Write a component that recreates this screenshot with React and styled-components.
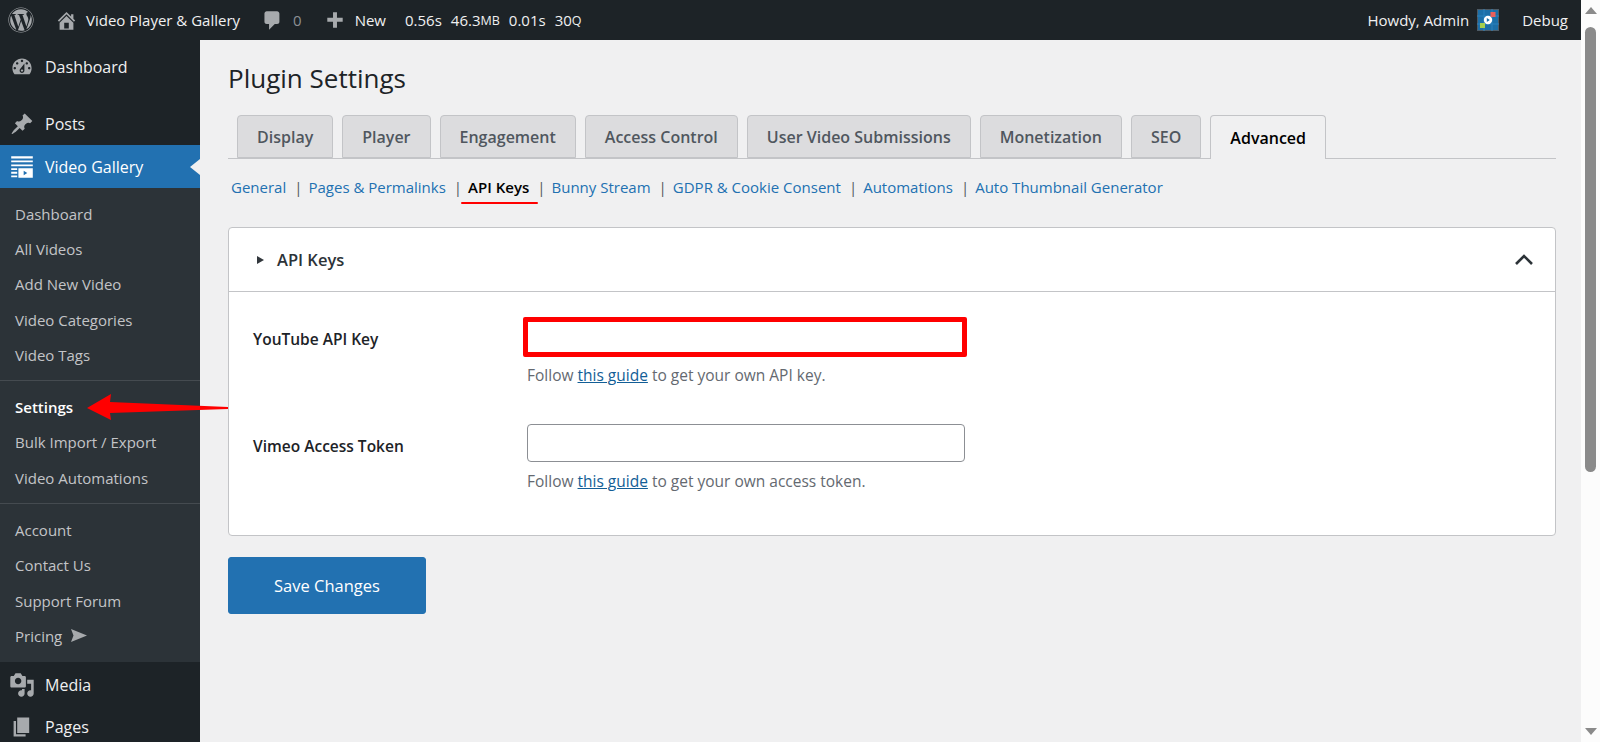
import React from "react";
import styled, { createGlobalStyle } from "styled-components";
import { FaWordpress } from "react-icons/fa";

const Global = createGlobalStyle`
  html, body { margin: 0; padding: 0; height: 100%; overflow: hidden; }
  body { font-family: "Open Sans", "Noto Sans", "Liberation Sans", sans-serif; background: #f0f0f1; }
  * { box-sizing: border-box; }
`;

const Shell = styled.div`
  position: relative;
  display: flex;
  width: 1600px;
  height: 742px;
  overflow: hidden;
`;
const Page = styled.div`
  flex: 1;
  min-width: 0;
  display: flex;
  flex-direction: column;
`;
const TopBar = styled.header`
  height: 40px;
  flex: none;
  display: flex;
  align-items: center;
  background: #1d2327;
  color: #f0f0f1;
  font-size: 15px;
  padding: 0 13px 0 8px;
  white-space: nowrap;
`;
const BarItem = styled.span`
  display: inline-flex;
  align-items: center;
  gap: ${(p) => p.$gap || 0}px;
  margin-left: ${(p) => p.$ml || 0}px;
  color: ${(p) => p.$muted ? "#8c8f94" : "#f0f0f1"};
`;
const BarIcon = styled.svg`
  width: ${(p) => p.$size || 20}px;
  height: ${(p) => p.$size || 20}px;
  fill: #a7aaad;
  flex: none;
`;
const Small = styled.span`
  font-size: 12.5px;
`;
const BarSpacer = styled.div`
  flex: 1;
`;
const Body = styled.div`
  flex: 1;
  min-height: 0;
  display: flex;
`;
const Sidebar = styled.nav`
  width: 200px;
  flex: none;
  background: #1d2327;
  padding-top: 6px;
`;
const MenuRow = styled.div`
  position: relative;
  height: ${(p) => p.$h || 42}px;
  display: flex;
  align-items: center;
  gap: 0;
  color: ${(p) => p.$active ? "#fff" : "#f0f0f1"};
  background: ${(p) => p.$active ? "#2271b1" : "transparent"};
  font-size: 16px;
  margin-top: ${(p) => p.$mt || 0}px;
  ${(p) => p.$active && `
    &::after {
      content: "";
      position: absolute;
      right: 0;
      top: 50%;
      margin-top: -8px;
      border: 8px solid transparent;
      border-left: 0;
      border-right: 10px solid #f0f0f1;
    }
  `}
`;
const MenuIconSlot = styled.span`
  width: 45px;
  flex: none;
  display: flex;
  justify-content: center;
  padding-right: 1px;
`;
const MenuIcon = styled.svg`
  width: ${(p) => p.$size || 24}px;
  height: ${(p) => p.$size || 24}px;
  fill: ${(p) => p.$active ? "#fff" : "#a7aaad"};
`;
const SubMenu = styled.div`
  background: #2c3338;
`;
const SubGroup = styled.div`
  padding: 8px 0;
  border-bottom: ${(p) => p.$last ? "none" : "1px solid #454b50"};
`;
const SubItem = styled.div`
  height: 35.3px;
  display: flex;
  align-items: center;
  gap: 9px;
  padding-left: 15px;
  font-size: 15px;
  color: ${(p) => p.$current ? "#fff" : "#c3c4c7"};
  font-weight: ${(p) => p.$current ? 600 : 400};
`;
const PricingGlyph = styled.svg`
  width: 16px;
  height: 13px;
  fill: #a7aaad;
`;
const Main = styled.main`
  flex: 1;
  min-width: 0;
  padding: 0 25px 0 28px;
`;
const Title = styled.h1`
  margin: 0;
  height: 75px;
  display: flex;
  align-items: center;
  font-size: 26px;
  font-weight: 400;
  color: #1d2327;
`;
const Tabs = styled.div`
  display: flex;
  gap: 9px;
  padding-left: 9px;
  height: 44px;
  border-bottom: 1px solid #c3c4c7;
`;
const Tab = styled.div`
  height: ${(p) => p.$active ? 44 : 43}px;
  padding: 0 ${(p) => p.$pad || 19}px;
  display: flex;
  align-items: center;
  font-size: 16px;
  font-weight: 600;
  border: 1px solid #c3c4c7;
  border-bottom: ${(p) => p.$active ? "none" : "1px solid #c3c4c7"};
  border-radius: 4px 4px 0 0;
  background: ${(p) => p.$active ? "#f0f0f1" : "#dcdcde"};
  color: ${(p) => p.$active ? "#000" : "#50575e"};
`;
const SubNav = styled.div`
  height: 68px;
  padding: 16px 0 0 3px;
  display: flex;
  align-items: flex-start;
  font-size: 15px;
  line-height: 24px;
  white-space: nowrap;
`;
const NavLink = styled.a`
  color: #2271b1;
`;
const ActiveLink = styled.a`
  position: relative;
  color: #000;
  font-weight: 600;
  &::after {
    content: "";
    position: absolute;
    left: -7px;
    right: -9px;
    top: 27px;
    height: 2px;
    background: #f00;
    border-radius: 1px;
  }
`;
const Sep = styled.span`
  color: #50575e;
  margin: 0 6px 0 ${(p) => p.$l || 8}px;
`;
const Card = styled.section`
  background: #fff;
  border: 1px solid #c3c4c7;
  border-radius: 4px;
  height: 309px;
`;
const CardHead = styled.div`
  height: 64px;
  display: flex;
  align-items: center;
  padding: 0 22px 0 28px;
  border-bottom: 1px solid #c3c4c7;
  font-size: 16.5px;
  font-weight: 600;
  color: #2c3338;
`;
const Caret = styled.span`
  width: 0;
  height: 0;
  border-style: solid;
  border-width: 4.5px 0 4.5px 7px;
  border-color: transparent transparent transparent #32373c;
  margin-right: 13px;
`;
const HeadSpacer = styled.div`
  flex: 1;
`;
const Chevron = styled.svg`
  width: 18px;
  height: 11px;
  fill: none;
  stroke: #2c3338;
  stroke-width: 2.6;
`;
const CardBody = styled.div`
  padding: 25px 0 0 24px;
  display: grid;
  grid-template-columns: 274px 1fr;
  row-gap: 37px;
  align-items: start;
`;
const Label = styled.label`
  line-height: 44px;
  font-size: 15.5px;
  font-weight: 600;
  color: #1d2327;
`;
const Field = styled.div`
  display: flex;
  flex-direction: column;
`;
const Input = styled.div`
  background: #fff;
  ${(p) => p.$marked ? `
    width: 444px;
    height: 40px;
    margin-left: -4px;
    border: 5px solid #f00;
    border-radius: 2px;
  ` : `
    width: 438px;
    height: 38px;
    border: 1px solid #8c8f94;
    border-radius: 4px;
  `}
`;
const Help = styled.p`
  margin: ${(p) => p.$mt || 6}px 0 0;
  font-size: 15.5px;
  line-height: 24px;
  color: #646970;
`;
const HelpLink = styled.a`
  color: #135e96;
  text-decoration: underline;
`;
const SaveButton = styled.button`
  display: block;
  margin-top: 21px;
  width: 198px;
  height: 57px;
  background: #2271b1;
  border: 1px solid #2271b1;
  border-radius: 3px;
  color: #fff;
  font-family: inherit;
  font-size: 16.5px;
`;
const ScrollTrack = styled.div`
  width: 19px;
  flex: none;
  background: #fcfcfc;
  display: flex;
  flex-direction: column;
  align-items: center;
  position: relative;
`;
const ScrollArrow = styled.span`
  width: 0;
  height: 0;
  border-left: 6.5px solid transparent;
  border-right: 6.5px solid transparent;
  ${(p) => p.$up
    ? `border-bottom: 7px solid #8a8a8a; margin-top: 7px;`
    : `border-top: 7px solid #8a8a8a; margin-top: 256px;`}
`;
const ScrollThumb = styled.span`
  width: 11px;
  height: 445px;
  margin-top: 13px;
  background: #8a8a8a;
  border-radius: 6px;
`;
const Annotation = styled.svg`
  position: absolute;
  left: 0;
  top: 0;
  width: 240px;
  height: 440px;
  fill: #f00;
  pointer-events: none;
`;

const P = {
  home: "M16 8.5l1.53 1.53-1.06 1.06L10 4.62l-6.47 6.47-1.06-1.06L10 2.5l4 4v-2h2v4zm-6-2.46l6 5.99V18H4v-5.97zM12 17v-5H8v5h4z",
  comment: "M5 2h9c1.1 0 2 .9 2 2v7c0 1.1-.9 2-2 2h-2l-5 5v-5H5c-1.1 0-2-.9-2-2V4c0-1.1.9-2 2-2z",
  plus: "M17 8v3.5h-5.2V17H8.2v-5.5H3V8h5.2V3h3.6v5H17z",
  dash: "M3.76 16h12.48c1.1-1.37 1.76-3.11 1.76-5 0-4.42-3.58-8-8-8s-8 3.58-8 8c0 1.89.66 3.63 1.76 5zM10 4c.55 0 1 .45 1 1s-.45 1-1 1-1-.45-1-1 .45-1 1-1zM6 6c.55 0 1 .45 1 1s-.45 1-1 1-1-.45-1-1 .45-1 1-1zm8 0c.55 0 1 .45 1 1s-.45 1-1 1-1-.45-1-1 .45-1 1-1zm-5.37 5.55L12 7v6c0 1.1-.9 2-2 2s-2-.9-2-2c0-.57.24-1.08.63-1.45zM4 10c.55 0 1 .45 1 1s-.45 1-1 1-1-.45-1-1 .45-1 1-1zm12 0c.55 0 1 .45 1 1s-.45 1-1 1-1-.45-1-1 .45-1 1-1zm-5 3c0-.55-.45-1-1-1s-1 .45-1 1 .45 1 1 1 1-.45 1-1z",
  pin: "M10.44 3.02l1.82-1.82 6.36 6.35-1.83 1.82c-1.05-.68-2.48-.57-3.41.36l-.75.75c-.92.93-1.04 2.35-.35 3.41l-1.83 1.82-2.41-2.41-2.8 2.79c-.42.42-3.38 2.71-3.8 2.29s1.86-3.39 2.28-3.81l2.79-2.79L4.1 9.36l1.83-1.82c1.05.69 2.48.57 3.4-.36l.75-.75c.93-.92 1.05-2.35.36-3.41z",
  gallery: "M1 1h18v2H1zM1 4.5h18v1.6H1zM1 8h18v1.4H1zM1 11h5v1.6H1zM1 14h5v1.6H1zM1 17h5v1.6H1zM7 11h12v8H7zM11.4 13.2v3.6l3-1.8z",
  media: "M13 11V4c0-.55-.45-1-1-1h-1.67L9 1H5L3.67 3H2c-.55 0-1 .45-1 1v7c0 .55.45 1 1 1h10c.55 0 1-.45 1-1zM7 4.5c1.38 0 2.5 1.12 2.5 2.5S8.38 9.5 7 9.5 4.5 8.38 4.5 7 5.62 4.5 7 4.5zM14 6h5v10.5c0 1.38-1.12 2.5-2.5 2.5S14 17.88 14 16.5s1.12-2.5 2.5-2.5c.17 0 .34.02.5.05V9h-3V6zm-4 8.05V13h2v3.5c0 1.38-1.12 2.5-2.5 2.5S7 17.88 7 16.5 8.12 14 9.5 14c.17 0 .34.02.5.05z",
  pages: "M6 15V2h10v13H6zm-1 1h8v2H3V5h2v11z",
};

const Icon = ({ d, size, active }) => (
  <MenuIconSlot>
    <MenuIcon viewBox="0 0 20 20" $size={size} $active={active}><path fillRule="evenodd" d={d} /></MenuIcon>
  </MenuIconSlot>
);

const Avatar = () => (
  <svg width="22" height="22" viewBox="0 0 22 22">
    <rect width="22" height="22" fill="#1c6fa8" />
    <rect x="0.5" y="0.5" width="21" height="21" fill="none" stroke="#4d5b66" />
    <path d="M7 0v22M15 0v22M0 7h22M0 15h22" stroke="#2a82bd" strokeWidth="1" />
    <rect x="13.5" y="3" width="5" height="5" fill="#e9605c" />
    <rect x="3" y="14" width="5" height="5" fill="#a5cf4f" />
    <circle cx="11" cy="11" r="4.2" fill="#fff" />
    <path d="M9.8 9l3 2-3 2z" fill="#1c6fa8" />
  </svg>
);

const tabs = [
  ["Display", 19], ["Player", 19], ["Engagement", 19], ["Access Control", 19],
  ["User Video Submissions", 19], ["Monetization", 19], ["SEO", 19],
];
const groups = [
  [["Dashboard"], ["All Videos"], ["Add New Video"], ["Video Categories"], ["Video Tags"]],
  [["Settings", true], ["Bulk Import / Export"], ["Video Automations"]],
  [["Account"], ["Contact Us"], ["Support Forum"]],
];

export default function App() {
  return (
    <Shell>
      <Global />
      <Page>
        <TopBar>
          <BarItem><FaWordpress size={26} color="#a7aaad" /></BarItem>
          <BarItem $ml={21} $gap={8}>
            <BarIcon viewBox="0 0 20 20" $size={23}><path fillRule="evenodd" d={P.home} /></BarIcon>
            Video Player &amp; Gallery
          </BarItem>
          <BarItem $ml={21} $gap={9} $muted>
            <BarIcon viewBox="0 0 20 20" $size={23}><path d={P.comment} /></BarIcon>
            0
          </BarItem>
          <BarItem $ml={22} $gap={9}>
            <BarIcon viewBox="0 0 20 20" $size={22}><path d={P.plus} /></BarIcon>
            New
          </BarItem>
          <BarItem $ml={19}>0.56s</BarItem>
          <BarItem $ml={9}>46.3<Small>MB</Small></BarItem>
          <BarItem $ml={9}>0.01s</BarItem>
          <BarItem $ml={9}>30<Small>Q</Small></BarItem>
          <BarSpacer />
          <BarItem $gap={8}>Howdy, Admin <Avatar /></BarItem>
          <BarItem $ml={23}>Debug</BarItem>
        </TopBar>
        <Body>
          <Sidebar>
            <MenuRow><Icon d={P.dash} />Dashboard</MenuRow>
            <MenuRow $mt={15}><Icon d={P.pin} />Posts</MenuRow>
            <MenuRow $h={43} $active><Icon d={P.gallery} active />Video Gallery</MenuRow>
            <SubMenu>
              {groups.map((g, i) => (
                <SubGroup key={i} $last={i === groups.length - 1}>
                  {g.map(([label, current]) => (
                    <SubItem key={label} $current={current}>{label}</SubItem>
                  ))}
                  {i === groups.length - 1 && (
                    <SubItem>
                      Pricing
                      <PricingGlyph viewBox="0 0 16 13"><path d="M0 0l16 6.5L0 13l2.5-6.5z" /></PricingGlyph>
                    </SubItem>
                  )}
                </SubGroup>
              ))}
            </SubMenu>
            <MenuRow $mt={2}><Icon d={P.media} size={26} />Media</MenuRow>
            <MenuRow><Icon d={P.pages} size={24} />Pages</MenuRow>
          </Sidebar>
          <Main>
            <Title>Plugin Settings</Title>
            <Tabs>
              {tabs.map(([t, pad]) => <Tab key={t} $pad={pad}>{t}</Tab>)}
              <Tab $active>Advanced</Tab>
            </Tabs>
            <SubNav>
              <NavLink>General</NavLink><Sep>|</Sep>
              <NavLink>Pages &amp; Permalinks</NavLink><Sep>|</Sep>
              <ActiveLink>API Keys</ActiveLink><Sep>|</Sep>
              <NavLink>Bunny Stream</NavLink><Sep>|</Sep>
              <NavLink>GDPR &amp; Cookie Consent</NavLink><Sep>|</Sep>
              <NavLink>Automations</NavLink><Sep>|</Sep>
              <NavLink>Auto Thumbnail Generator</NavLink>
            </SubNav>
            <Card>
              <CardHead>
                <Caret />API Keys
                <HeadSpacer />
                <Chevron viewBox="0 0 18 11"><path d="M1 10l8-8 8 8" /></Chevron>
              </CardHead>
              <CardBody>
                <Label>YouTube API Key</Label>
                <Field>
                  <Input $marked />
                  <Help>Follow <HelpLink>this guide</HelpLink> to get your own API key.</Help>
                </Field>
                <Label>Vimeo Access Token</Label>
                <Field>
                  <Input />
                  <Help $mt={7}>Follow <HelpLink>this guide</HelpLink> to get your own access token.</Help>
                </Field>
              </CardBody>
            </Card>
            <SaveButton>Save Changes</SaveButton>
          </Main>
        </Body>
      </Page>
      <ScrollTrack>
        <ScrollArrow $up />
        <ScrollThumb />
        <ScrollArrow />
      </ScrollTrack>
      <Annotation viewBox="0 0 240 440">
        <path d="M87 408L111 394L110 402L228 407L228 409L110 413L111 420Z" />
      </Annotation>
    </Shell>
  );
}
